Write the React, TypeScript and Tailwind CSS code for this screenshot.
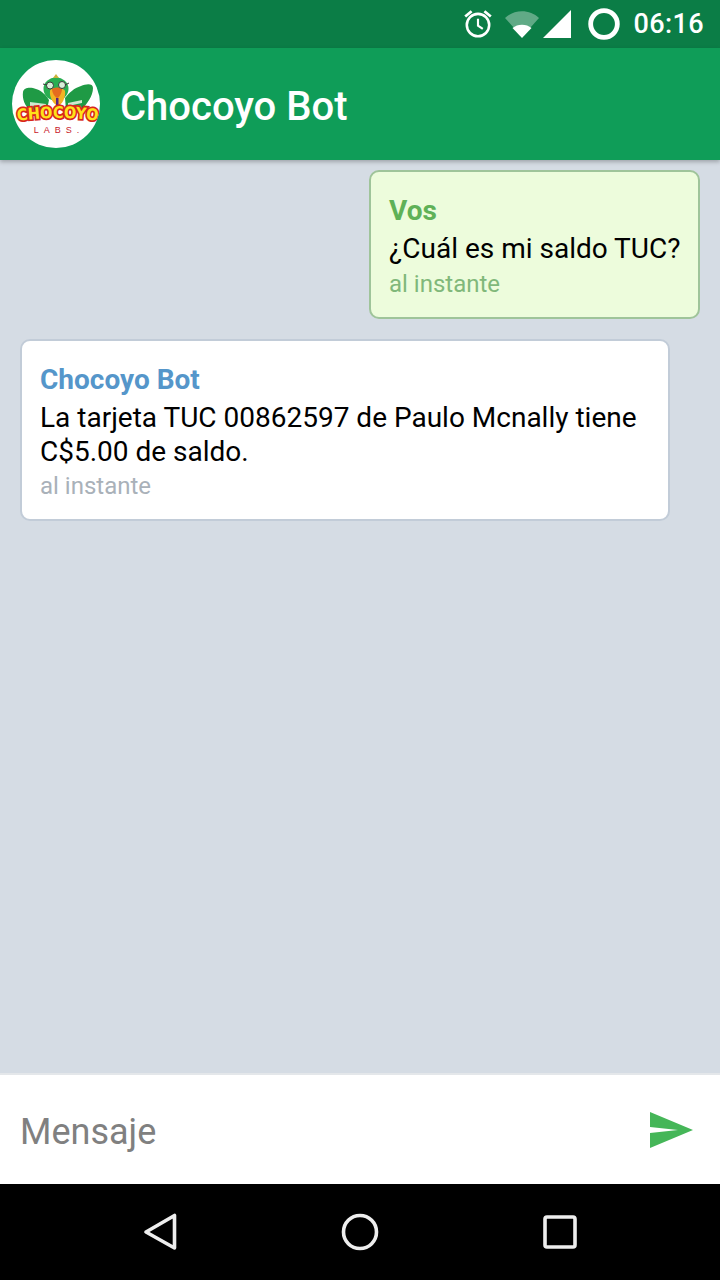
import React from 'react';

const StatusIcons = () => (
  <div className="flex items-center">
    <svg width="32" height="32" viewBox="0 0 30 30" className="mr-[11px]" fill="none" stroke="white">
      <circle cx="15" cy="16" r="10.5" strokeWidth="2.4" />
      <path d="M15 10v6.5l4.5 3" strokeWidth="2" />
      <path d="M3 8l6-5M27 8l-6-5" strokeWidth="2.6" />
    </svg>
    <svg width="34" height="28" viewBox="0 0 34 28" className="mr-[4px]">
      <path d="M0 8C9-1 25-1 34 8L17 27Z" fill="white" fillOpacity="0.35" />
      <path d="M7.5 18C12.5 13.500 21.500 13.500 26.500 18L17 28Z" fill="white" />
    </svg>
    <svg width="28" height="28" viewBox="0 0 28 28" className="mr-[17px]">
      <path d="M0 28L28 0V28Z" fill="white" />
    </svg>
    <svg width="32" height="32" viewBox="0 0 30 30" className="mr-[13px]" fill="none">
      <circle cx="15" cy="15" r="12.500" stroke="white" strokeWidth="4.500" />
    </svg>
    <span className="text-[27px] leading-none text-white font-medium tracking-[0.4px]">06:16</span>
  </div>
);

const Logo = () => (
  <div className="w-[88px] h-[88px] rounded-full bg-white overflow-hidden shrink-0">
    <svg width="88" height="88" viewBox="0 0 88 88">
      {/* wings */}
      <path d="M11 32C12 27 19 27 24 29C30 31 34 35 37 40L35 50H18C13 46 10 39 11 32Z" fill="#1f9a45" />
      <path d="M81 28C81 23 74 24 69 26C62 28 57 33 53 38L54 50H69C75 44 81 36 81 28Z" fill="#1f9a45" />
      <path d="M18 42l16 2v3l-16-1Z" fill="#cfe8cf" />
      <path d="M56 43l14-3v3l-14 3Z" fill="#cfe8cf" />
      {/* head */}
      <ellipse cx="44" cy="29" rx="12.500" ry="11.500" fill="#2aae52" />
      <path d="M38 31C38 27 52 27 53 31C54 37 50 45 46 46C42 45 37 37 38 31Z" fill="#f2b324" />
      <path d="M40 29C43 27 48 27 50 29C50 33 47 38 45 38C43 37 40 33 40 29Z" fill="#e56b1f" />
      <circle cx="38" cy="25.500" r="3.500" fill="#d8f0d8" stroke="#3a3a3a" strokeWidth="1" />
      <circle cx="50" cy="25" r="3.500" fill="#d8f0d8" stroke="#3a3a3a" strokeWidth="1" />
      <path d="M31 24l4 1M53 25l4-2" stroke="#3a3a3a" strokeWidth="1" />
      <path d="M41 18l3-4 3 4Z" fill="#c9b23a" />
      <path d="M44 38h2.500v8H44Z" fill="#5a2080" />
      {/* wordmark */}
      <path id="chocoyo-arc" d="M2 62C22 57 66 57 86 61" fill="none" />
      <text
        fontFamily="'DejaVu Sans', sans-serif"
        fontWeight="700"
        fontSize="16"
        fill="#ffe21a"
        stroke="#d9271c"
        strokeWidth="3.500"
        paintOrder="stroke"
        textLength="80"
        lengthAdjust="spacingAndGlyphs"
      >
        <textPath href="#chocoyo-arc" startOffset="4">
          CHOCOYO
        </textPath>
      </text>
      <text
        x="47"
        y="73"
        textAnchor="middle"
        fontFamily="'Liberation Sans', sans-serif"
        fontSize="9"
        fill="#c8202a"
        letterSpacing="5"
      >
        LABS.
      </text>
    </svg>
  </div>
);

const NavBar = () => (
  <div className="h-[96px] bg-black flex items-center justify-center shrink-0">
    <div className="w-[480px] flex items-center justify-between pl-[20px] pr-[20px]">
      <svg width="40" height="40" viewBox="0 0 40 40" fill="none">
        <path d="M34.500 3.500V36L6 20Z" stroke="#eeeeee" strokeWidth="3.600" strokeLinejoin="round" />
      </svg>
      <svg width="40" height="40" viewBox="0 0 40 40" fill="none">
        <circle cx="20" cy="20" r="16.500" stroke="#eeeeee" strokeWidth="3.600" />
      </svg>
      <svg width="40" height="40" viewBox="0 0 40 40" fill="none">
        <rect x="5" y="5" width="30" height="30" rx="2" stroke="#eeeeee" strokeWidth="3.600" />
      </svg>
    </div>
  </div>
);

const App: React.FC = () => {
  return (
    <div className="w-[720px] h-[1280px] flex flex-col overflow-hidden bg-[#d5dce4] font-['Roboto',sans-serif]">
      {/* Status bar */}
      <div className="h-[48px] bg-[#0b7d46] flex items-center justify-end pr-[16px] shrink-0">
        <StatusIcons />
      </div>

      {/* App bar */}
      <div className="relative z-10 h-[112px] bg-[#0f9d58] flex items-center pl-[12px] shrink-0 shadow-[0_2px_4px_rgba(0,0,0,0.25)]">
        <Logo />
        <span className="ml-[20px] mt-[6px] text-[40px] font-medium text-white leading-none">Chocoyo Bot</span>
      </div>

      {/* Messages */}
      <div className="flex-1 flex flex-col pt-[10px]">
        <div className="flex justify-end pr-[20px]">
          <div className="w-[331px] h-[149px] rounded-[10px] border-2 border-[#9fc49a] bg-[#edfcdc] pl-[18px] pt-[21px]">
            <p className="text-[28px] leading-[36px] font-bold text-[#5fb157]">Vos</p>
            <p className="text-[28px] leading-[40px] text-black">¿Cuál es mi saldo TUC?</p>
            <p className="text-[24px] leading-[30px] text-[#80b87a]">al instante</p>
          </div>
        </div>
        <div className="flex justify-start pl-[20px] mt-[20px]">
          <div className="w-[650px] h-[182px] rounded-[10px] border-2 border-[#c2ccd8] bg-white pl-[18px] pt-[21px]">
            <p className="text-[28px] leading-[36px] font-bold text-[#5596ca]">Chocoyo Bot</p>
            <p className="text-[28px] leading-[34px] text-black pt-[3px]">
              La tarjeta TUC 00862597 de Paulo Mcnally tiene
              <br />
              C$5.00 de saldo.
            </p>
            <p className="text-[24px] leading-[34px] text-[#a9b1b9]">al instante</p>
          </div>
        </div>
      </div>

      {/* Input */}
      <div className="h-[111px] bg-white border-t-2 border-[#e4e7ea] flex items-center justify-between pl-[20px] pr-[27px] shrink-0">
        <span className="text-[36px] text-[#808080] leading-none mt-[4px]">Mensaje</span>
        <svg width="43" height="36" viewBox="0 0 43 36">
          <path d="M0 0L43 18L0 36V21L28 18L0 15Z" fill="#45b658" />
        </svg>
      </div>

      <NavBar />
    </div>
  );
};

export default App;
